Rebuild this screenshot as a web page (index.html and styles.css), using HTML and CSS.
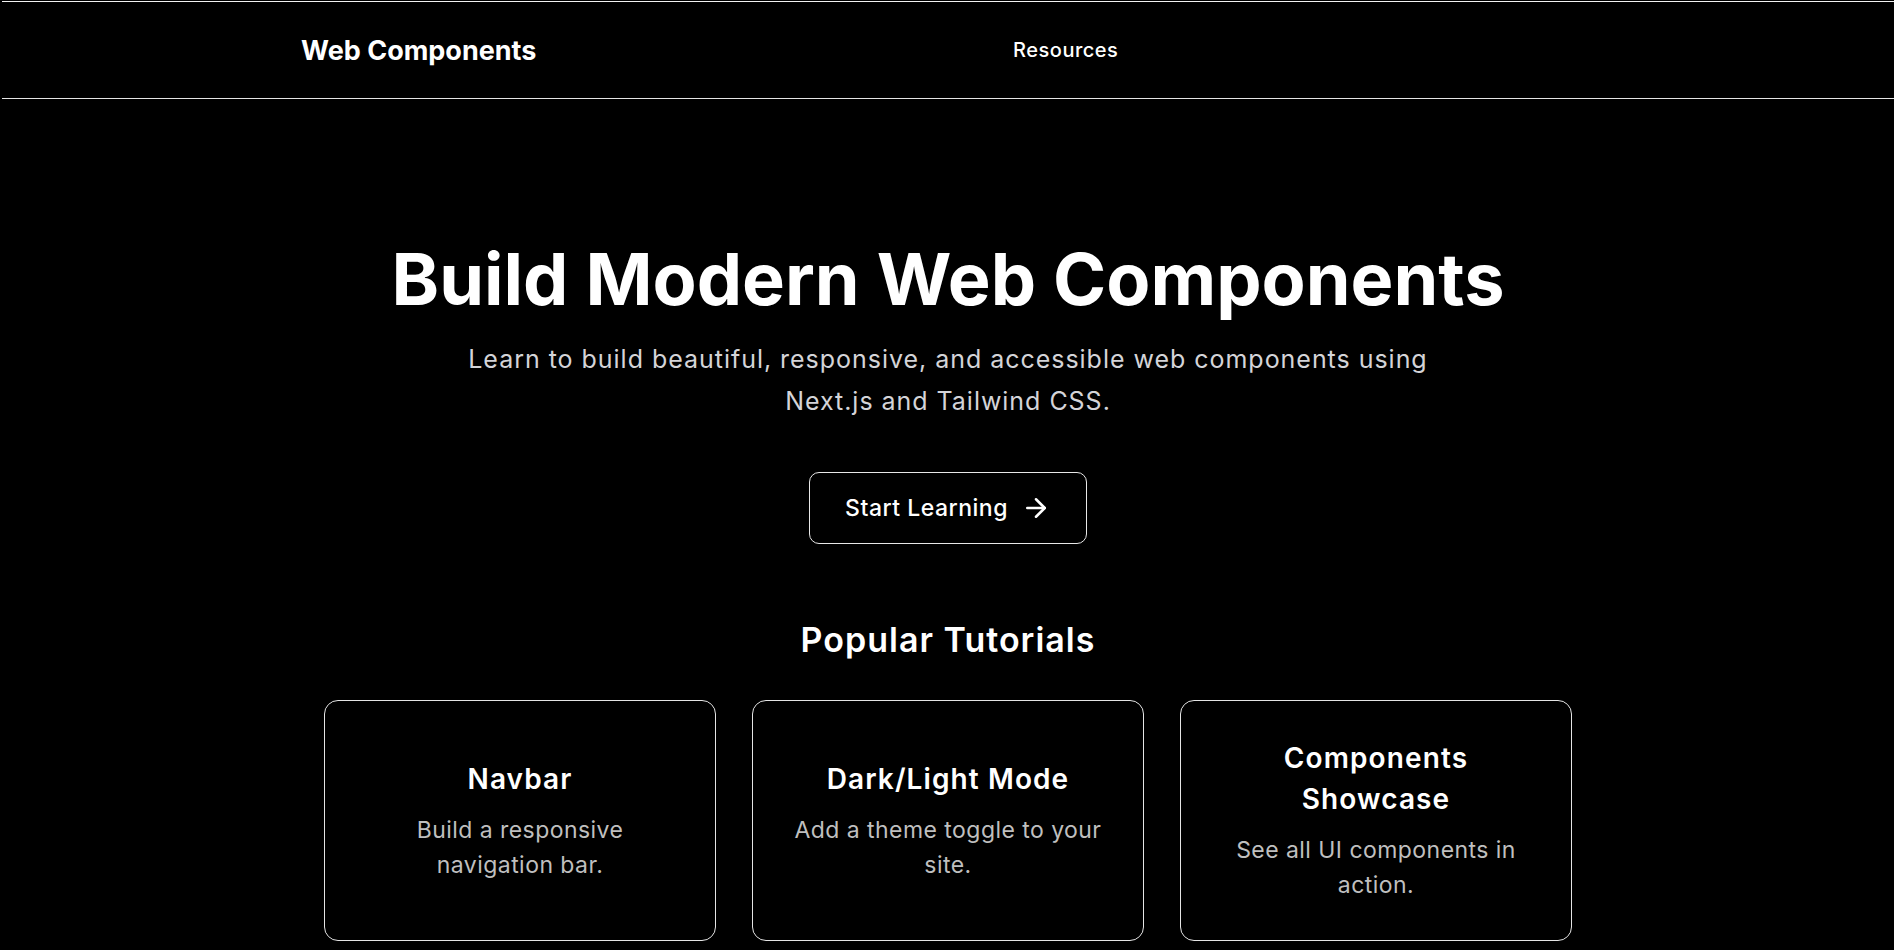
FILE: index.html
```html
<!DOCTYPE html>
<html lang="en">
<head>
<meta charset="utf-8">
<title>Web Components</title>
<link rel="stylesheet" href="styles.css">
</head>
<body>
<header class="site-header">
  <div class="header-inner">
    <a class="logo" href="#">Web Components</a>
    <nav class="nav">
      <a class="nav-link" href="#">Resources</a>
    </nav>
    <div class="header-actions"></div>
  </div>
</header>
<main class="main">
  <section class="hero">
    <h1 class="hero-title">Build Modern Web Components</h1>
    <p class="hero-text">Learn to build beautiful, responsive, and accessible web components using Next.js and Tailwind CSS.</p>
    <a class="btn" href="#">
      <span>Start Learning</span>
      <svg class="btn-icon" viewBox="0 0 24 24" fill="none" stroke="currentColor" stroke-width="2" stroke-linecap="round" stroke-linejoin="round"><path d="M5 12h14"/><path d="m12 5 7 7-7 7"/></svg>
    </a>
  </section>
  <section class="tutorials">
    <h2 class="section-title">Popular Tutorials</h2>
    <div class="cards">
      <a class="card" href="#">
        <h3 class="card-title">Navbar</h3>
        <p class="card-text">Build a responsive navigation bar.</p>
      </a>
      <a class="card" href="#">
        <h3 class="card-title">Dark/Light Mode</h3>
        <p class="card-text">Add a theme toggle to your site.</p>
      </a>
      <a class="card" href="#">
        <h3 class="card-title">Components Showcase</h3>
        <p class="card-text">See all UI components in action.</p>
      </a>
    </div>
  </section>
</main>
</body>
</html>
```
FILE: styles.css
```css
* { box-sizing: border-box; }
html, body { margin: 0; padding: 0; background: #000; }
body {
  color: #fff;
  font-family: Inter, "Noto Sans", sans-serif;
  padding-top: 1px;
  padding-left: 2px;
}
a { color: inherit; text-decoration: none; }
h1, h2, h3, p { margin: 0; }

.site-header {
  border-top: 1px solid #f2f2f2;
  border-bottom: 1px solid #e5e5e5;
}
.header-inner {
  width: 1294px;
  height: 96px;
  margin: 0 auto;
  display: flex;
  align-items: center;
  justify-content: space-between;
}
.logo {
  font-size: 27px;
  font-weight: 700;
}
.nav-link {
  font-size: 20px;
  font-weight: 500;
  letter-spacing: 0.5px;
}
.header-actions { width: 0; }

.main { display: flex; flex-direction: column; align-items: center; }

.hero {
  padding-top: 144px;
  display: flex;
  flex-direction: column;
  align-items: center;
  text-align: center;
}
.hero-title {
  font-size: 72px;
  line-height: 72px;
  font-weight: 700;
}
.hero-text {
  margin-top: 23px;
  max-width: 1000px;
  font-size: 25px;
  line-height: 42px;
  letter-spacing: 0.97px;
  color: #d4d4d8;
}
.btn {
  margin-top: 50px;
  display: inline-flex;
  align-items: center;
  gap: 13px;
  height: 72px;
  padding: 0 35px;
  border: 1px solid #e8e8e8;
  border-radius: 10px;
  font-size: 23px;
  font-weight: 500;
  letter-spacing: 0.5px;
}
.btn-icon { width: 30px; height: 30px; }

.tutorials {
  margin-top: 74px;
  display: flex;
  flex-direction: column;
  align-items: center;
}
.section-title {
  font-size: 34px;
  line-height: 43px;
  font-weight: 600;
  letter-spacing: 1px;
}
.cards {
  margin-top: 39px;
  width: 1248px;
  display: grid;
  grid-template-columns: repeat(3, 1fr);
  gap: 36px;
}
.card {
  border: 1px solid #e5e5e5;
  border-radius: 14px;
  padding: 37px 34px;
  display: flex;
  flex-direction: column;
  justify-content: center;
  align-items: center;
  text-align: center;
}
.card-title {
  font-size: 28px;
  line-height: 41px;
  font-weight: 600;
  letter-spacing: 1.1px;
}
.card-text {
  margin-top: 13px;
  font-size: 23px;
  line-height: 35px;
  letter-spacing: 0.45px;
  color: #bfbfbf;
}
```
